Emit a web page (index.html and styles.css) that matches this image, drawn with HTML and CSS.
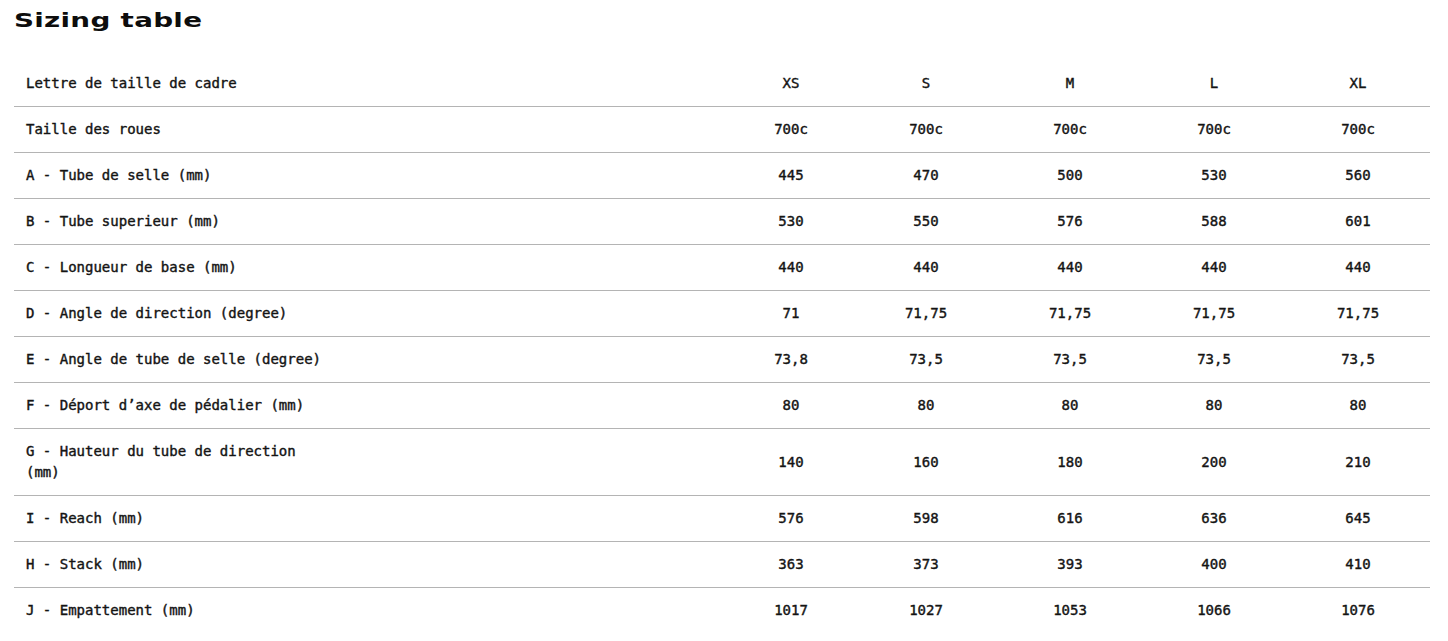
FILE: index.html
```html
<!DOCTYPE html>
<html lang="fr">
<head>
<meta charset="utf-8">
<title>Sizing table</title>
<link rel="stylesheet" href="styles.css">
</head>
<body>
<main class="page">
  <header class="head">
    <h2 class="title">Sizing table</h2>
  </header>
  <table class="sizing">
    <colgroup>
      <col class="col-label">
      <col class="col-xs">
      <col class="col-size">
      <col class="col-size">
      <col class="col-size">
      <col class="col-size">
    </colgroup>
    <thead>
      <tr><th class="label">Lettre de taille de cadre</th><th>XS</th><th>S</th><th>M</th><th>L</th><th>XL</th></tr>
    </thead>
    <tbody>
      <tr><td class="label">Taille des roues</td><td>700c</td><td>700c</td><td>700c</td><td>700c</td><td>700c</td></tr>
      <tr><td class="label">A - Tube de selle (mm)</td><td>445</td><td>470</td><td>500</td><td>530</td><td>560</td></tr>
      <tr><td class="label">B - Tube superieur (mm)</td><td>530</td><td>550</td><td>576</td><td>588</td><td>601</td></tr>
      <tr><td class="label">C - Longueur de base (mm)</td><td>440</td><td>440</td><td>440</td><td>440</td><td>440</td></tr>
      <tr><td class="label">D - Angle de direction (degree)</td><td>71</td><td>71,75</td><td>71,75</td><td>71,75</td><td>71,75</td></tr>
      <tr><td class="label">E - Angle de tube de selle (degree)</td><td>73,8</td><td>73,5</td><td>73,5</td><td>73,5</td><td>73,5</td></tr>
      <tr><td class="label">F - Déport d’axe de pédalier (mm)</td><td>80</td><td>80</td><td>80</td><td>80</td><td>80</td></tr>
      <tr><td class="label"><span class="wrap">G - Hauteur du tube de direction (mm)</span></td><td>140</td><td>160</td><td>180</td><td>200</td><td>210</td></tr>
      <tr><td class="label">I - Reach (mm)</td><td>576</td><td>598</td><td>616</td><td>636</td><td>645</td></tr>
      <tr><td class="label">H - Stack (mm)</td><td>363</td><td>373</td><td>393</td><td>400</td><td>410</td></tr>
      <tr><td class="label">J - Empattement (mm)</td><td>1017</td><td>1027</td><td>1053</td><td>1066</td><td>1076</td></tr>
    </tbody>
  </table>
</main>
</body>
</html>
```
FILE: styles.css
```css
html, body {
  margin: 0;
  padding: 0;
  background: #ffffff;
  overflow: hidden;
}

.page {
  padding: 0 18px 0 14px;
  color: #111111;
}

.head {
  height: 61px;
  padding-top: 6px;
  box-sizing: border-box;
}

.title {
  display: inline-block;
  margin: 0;
  font-family: "DejaVu Sans", sans-serif;
  font-weight: 700;
  font-size: 20px;
  line-height: 28px;
  letter-spacing: 0.2px;
  transform: scaleX(1.39);
  transform-origin: left top;
  color: #0d0d0d;
}

.sizing {
  width: 100%;
  border-collapse: collapse;
  table-layout: fixed;
  font-family: "DejaVu Sans Mono", monospace;
  font-size: 14px;
  line-height: 21px;
  color: #141414;
  -webkit-text-stroke: 0.4px #141414;
}

.col-label { width: 714px; }
.col-xs { width: 126px; }
.col-size { width: 144px; }

.sizing th,
.sizing td {
  padding: 12px 0;
  text-align: center;
  font-weight: 400;
  vertical-align: middle;
  border-bottom: 1px solid #b4b4b4;
}

.sizing tbody tr:last-child td {
  border-bottom: none;
}

.sizing .label {
  text-align: left;
  padding-left: 12px;
}

.wrap {
  display: block;
  max-width: 290px;
}
```
